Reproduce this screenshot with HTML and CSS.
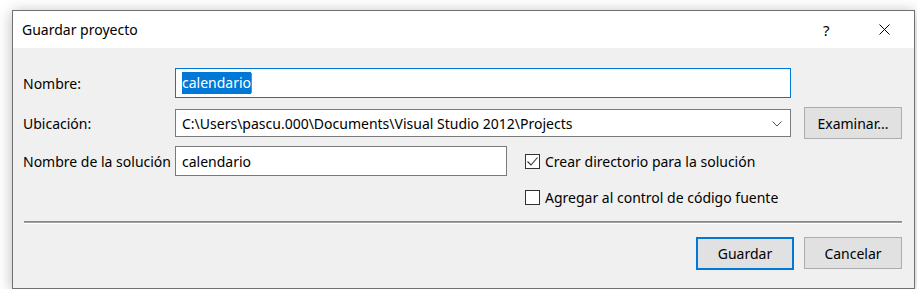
FILE: index.html
```html
<!DOCTYPE html>
<html lang="es">
<head>
<meta charset="UTF-8">
<title>Guardar proyecto</title>
<link rel="stylesheet" href="styles.css">
</head>
<body>

<div class="dialog">
  <div class="titlebar">
    <span class="title">Guardar proyecto</span>
    <span class="help">?</span>
    <span class="close">
      <svg width="11" height="11" viewBox="0 0 11 11"><path d="M0.5 0.5 L10.5 10.5 M10.5 0.5 L0.5 10.5" stroke="#000" stroke-width="1" fill="none"/></svg>
    </span>
  </div>

  <div class="content">
    <div class="row row-name">
      <label class="label">Nombre:</label>
      <div class="field field-wide focused"><span class="selected">calendario</span><span class="caret"></span></div>
    </div>

    <div class="row row-location">
      <label class="label">Ubicación:</label>
      <div class="field field-wide combo">
        <span>C:\Users\pascu.000\Documents\Visual Studio 2012\Projects</span>
        <svg class="chevron" width="10" height="6" viewBox="0 0 10 6"><path d="M0.5 0.5 L5 5 L9.5 0.5" stroke="#555" stroke-width="1" fill="none"/></svg>
      </div>
      <button class="btn">Examinar...</button>
    </div>

    <div class="row row-solution">
      <label class="label">Nombre de la solución</label>
      <div class="field field-short">calendario</div>
      <div class="check">
        <span class="box">
          <svg width="11" height="9" viewBox="0 0 11 9"><path d="M0.5 4.5 L4 8 L10.5 0.5" stroke="#333" stroke-width="1.1" fill="none"/></svg>
        </span>
        Crear directorio para la solución
      </div>
    </div>

    <div class="row row-source">
      <div class="check">
        <span class="box"></span>
        Agregar al control de código fuente
      </div>
    </div>

    <div class="separator"></div>

    <div class="actions">
      <button class="btn default">Guardar</button>
      <button class="btn">Cancelar</button>
    </div>
  </div>
</div>

</body>
</html>
```

FILE: styles.css
```css
body {
  margin: 0;
  background-color: #fff;
  font-family: "Noto Sans", "Open Sans", sans-serif;
  font-size: 14px;
  color: #000;
}
.dialog {
  width: 901px;
  height: 277px;
  margin: 10px 0 0 12px;
  border: 1px solid #707070;
  background-color: #f0f0f0;
  box-shadow: 0 2px 14px rgba(0, 0, 0, 0.28);
}
.titlebar {
  height: 37px;
  background-color: #fff;
  display: flex;
  align-items: center;
}
.title {
  padding-left: 9px;
  flex: 1;
}
.help {
  width: 20px;
  margin-right: 36px;
  font-size: 15px;
}
.close {
  display: flex;
  margin-right: 24px;
}
.content {
  padding: 20px 12px 0 10px;
}
.row {
  display: flex;
  align-items: center;
}
.label {
  width: 152px;
  white-space: nowrap;
  overflow: hidden;
}
.field {
  box-sizing: border-box;
  height: 30px;
  border: 1px solid #7a7a7a;
  background-color: #fff;
  display: flex;
  align-items: center;
  padding-left: 6px;
}
.field-wide {
  width: 616px;
}
.field-short {
  width: 332px;
}
.focused {
  border-color: #0078d7;
}
.selected {
  background-color: #0078d7;
  color: #fff;
  padding: 1px 0 2px;
}
.caret {
  width: 1px;
  height: 20px;
  background-color: #f7630c;
}
.row-location {
  margin-top: 9px;
}
.combo {
  height: 28px;
  justify-content: space-between;
  padding-right: 8px;
}
.chevron {
  margin-top: 1px;
}
.row-location .btn {
  margin-left: 13px;
}
.row-solution {
  margin-top: 7px;
}
.row-source {
  margin-top: 12px;
  padding-left: 502px;
}
.check {
  display: flex;
  align-items: center;
  margin-left: 18px;
}
.row-source .check {
  margin-left: 0;
}
.box {
  box-sizing: border-box;
  width: 15px;
  height: 15px;
  border: 1px solid #333;
  background-color: #fff;
  margin-right: 5px;
  display: flex;
  align-items: center;
  justify-content: center;
}
.separator {
  margin: 14px 0 0 1px;
  height: 1px;
  background-color: #a0a0a0;
  border-top: 1px solid #8a8a8a;
  border-bottom: 1px solid #fff;
}
.actions {
  display: flex;
  justify-content: flex-end;
  gap: 10px;
  margin-top: 13px;
}
.btn {
  box-sizing: border-box;
  width: 98px;
  height: 32px;
  font-family: inherit;
  font-size: 14px;
  color: #000;
  background-color: #e1e1e1;
  border: 1px solid #adadad;
  padding: 0;
}
.btn.default {
  border: 2px solid #0078d7;
  height: 33px;
}
```
